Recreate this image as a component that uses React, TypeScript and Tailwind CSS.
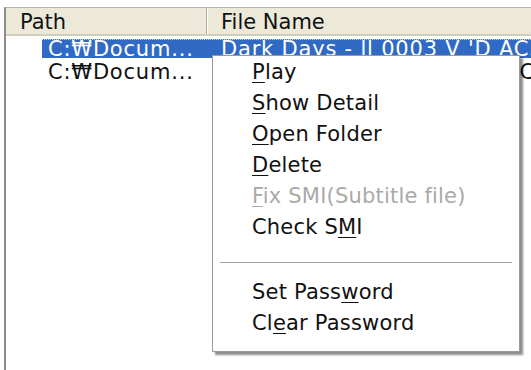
import React from "react";

const font = { fontFamily: '"DejaVu Sans", Verdana, sans-serif' };

function Item({ children, disabled }: { children: React.ReactNode; disabled?: boolean }) {
  return (
    <div
      className={`h-[31px] leading-[31px] pl-[39px] text-[21px] tracking-[0.2px] whitespace-nowrap ${
        disabled ? "text-[#a9a9a9]" : "text-[#111]"
      }`}
    >
      {children}
    </div>
  );
}

const U = ({ children }: { children: React.ReactNode }) => (
  <span className="underline underline-offset-[3px] decoration-1">{children}</span>
);

export default function App() {
  return (
    <div className="relative w-[531px] h-[370px] bg-white overflow-hidden" style={font}>
      <div className="ml-[4px] mt-[7px] h-[363px] border-l-2 border-t border-l-[#8c8c8c] border-t-[#b5b5b5] bg-white">
        {/* header */}
        <div className="flex h-[28px] bg-[#ece9d8] border-b-2 border-b-[#d3cfbf] text-[21px] leading-[28px] text-[#111]">
          <div className="w-[201px] pl-[14px] border-r border-r-[#aca899]">Path</div>
          <div className="flex-1 pl-[13px] border-l border-l-white">File Name</div>
        </div>
        {/* rows */}
        <div className="pt-[3px] text-[21px] tracking-[0.8px]">
          <div className="flex h-[19px] leading-[19px]">
            <div className="w-[36px] shrink-0" />
            <div className="flex flex-1 bg-[#316ac5] text-white border-t border-dotted border-t-[#c8d6ee] whitespace-nowrap overflow-hidden">
              <div className="w-[166px] shrink-0 pl-[6px]">C:₩Docum...</div>
              <div className="pl-[13px]">Dark Days - ll 0003 V 'D AC3 D</div>
            </div>
          </div>
          <div className="flex h-[19px] leading-[19px] mt-[5px] text-[#111]">
            <div className="w-[36px] shrink-0" />
            <div className="flex flex-1 whitespace-nowrap overflow-hidden">
              <div className="w-[166px] shrink-0 pl-[6px]">C:₩Docum...</div>
              <div className="pl-[13px]">Dark Days - ll 0004 XviD AC3 E</div>
            </div>
          </div>
        </div>
      </div>

      {/* context menu */}
      <div className="absolute left-[212px] top-[55px] w-[308px] bg-white border border-[#9a9a9a] pt-[1px] pb-[12px] shadow-[3px_3px_2px_rgba(0,0,0,0.45)]">
        <Item><U>P</U>lay</Item>
        <Item><U>S</U>how Detail</Item>
        <Item><U>O</U>pen Folder</Item>
        <Item><U>D</U>elete</Item>
        <Item disabled><U>F</U>ix SMI(Subtitle file)</Item>
        <Item>Check S<U>M</U>I</Item>
        <div className="h-[34px] pt-[19px] px-[7px]">
          <div className="w-full h-[1px] bg-[#a5a5a5]" />
        </div>
        <Item>Set Pass<U>w</U>ord</Item>
        <Item>Cl<U>e</U>ar Password</Item>
      </div>
    </div>
  );
}
